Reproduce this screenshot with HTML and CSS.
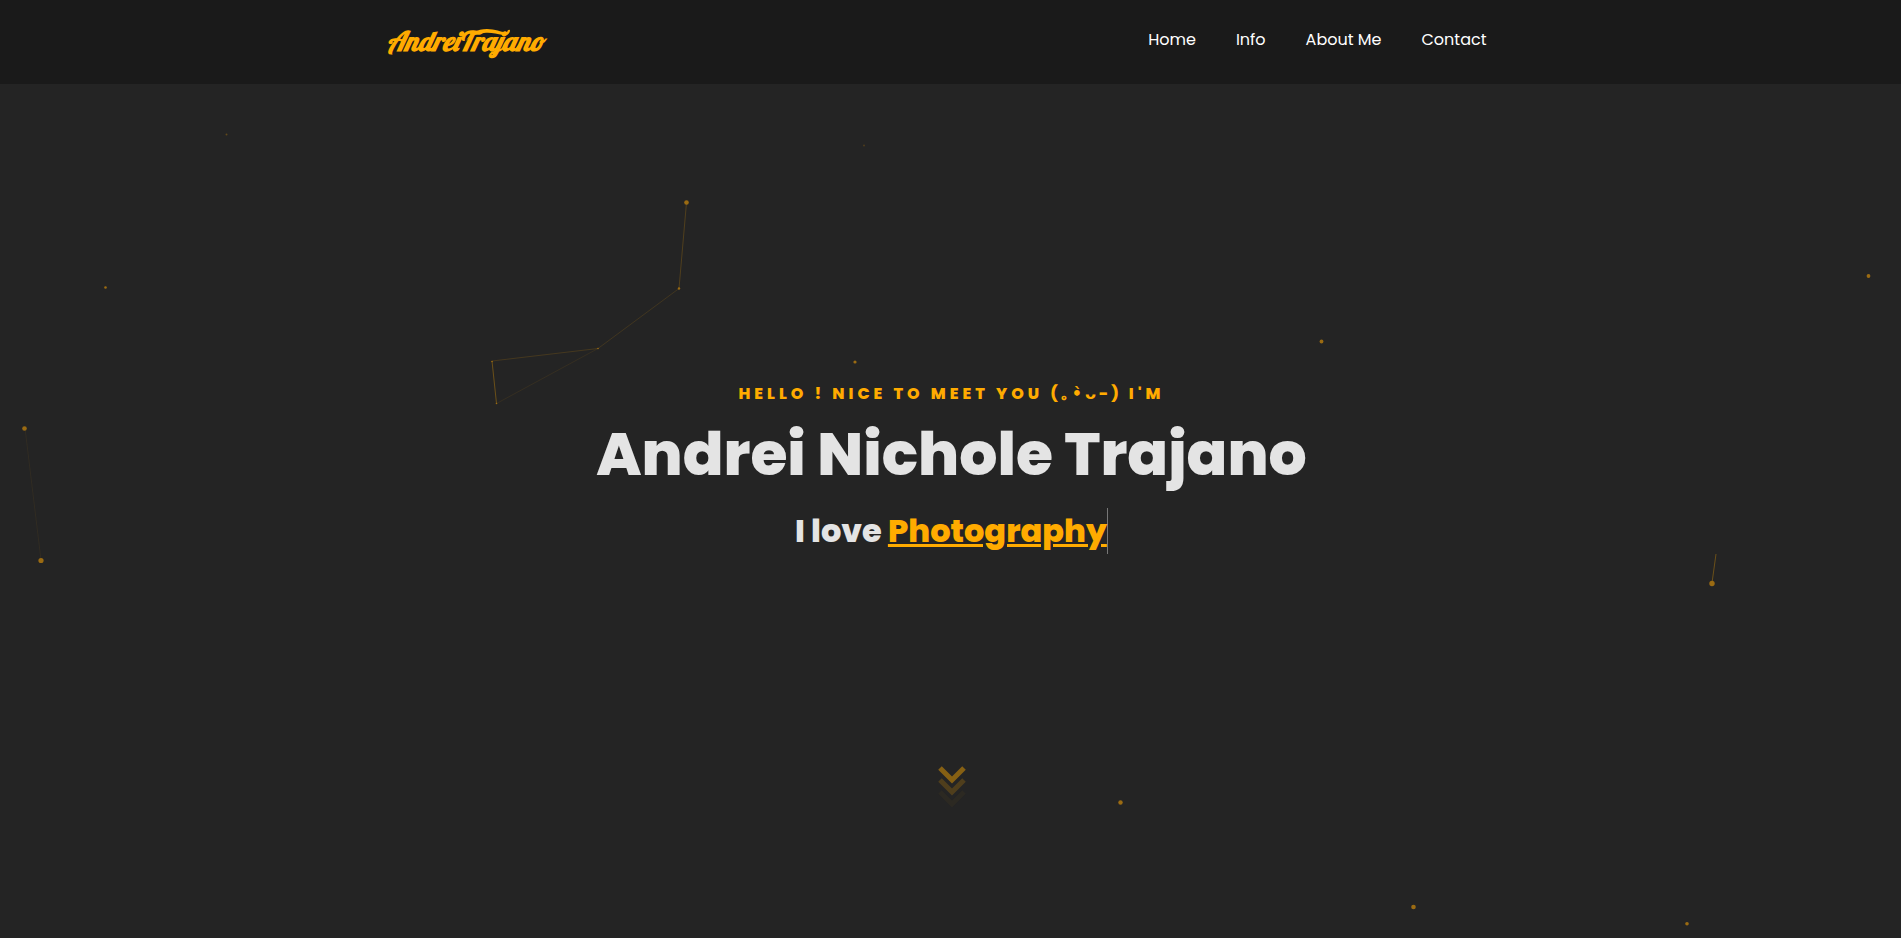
FILE: index.html
```html
<!DOCTYPE html>
<html lang="en">
<head>
<meta charset="utf-8">
<title>Andrei Trajano</title>
<link rel="stylesheet" href="styles.css">
</head>
<body>
<header class="site-header">
  <div class="header-inner">
    <a class="logo" href="#home">AndreiTrajano
      <svg class="swash" viewBox="0 0 46 14" aria-hidden="true"><path d="M1 13C5 5 12 1 22 1C31 1 38 5 42 4Q43 1 45 2C45 6 42 8 38 7C31 6 26 4 19 5C11 6 5 8 1 13Z"/></svg>
    </a>
    <nav class="nav" aria-label="Main">
      <a href="#home">Home</a>
      <a href="#info">Info</a>
      <a href="#about">About Me</a>
      <a href="#contact">Contact</a>
    </nav>
  </div>
</header>
<main class="hero" id="home">
  <svg class="particles" viewBox="0 84 1901 854" preserveAspectRatio="xMidYMin slice" aria-hidden="true">
    <g class="links">
      <path d="M686.500 202.500L679 288.500" opacity=".2"/>
      <path d="M679 288.500L598 348.500" opacity=".13"/>
      <path d="M598 348.500L492 361" opacity=".15"/>
      <path d="M598 348.500L496.500 403.500" opacity=".08"/>
      <path d="M492 361L496.500 403.500" opacity=".32"/>
      <path d="M25 428L41 560" opacity=".06"/>
      <path d="M1716 554L1712 583" opacity=".32"/>
    </g>
    <g class="dots">
      <circle cx="686.500" cy="202.500" r="2.300"/>
      <circle cx="679" cy="288.500" r="1.200"/>
      <circle cx="598" cy="348.500" r=".8"/>
      <circle cx="492" cy="361.500" r=".8"/>
      <circle cx="496.500" cy="403.500" r=".8"/>
      <circle cx="226.500" cy="134.500" r="1" opacity=".5"/>
      <circle cx="864" cy="145.500" r="1" opacity=".35"/>
      <circle cx="105.500" cy="287.500" r="1.300"/>
      <circle cx="24.500" cy="428.500" r="2.300"/>
      <circle cx="41" cy="560.500" r="2.600"/>
      <circle cx="855" cy="362" r="1.600"/>
      <circle cx="1321.500" cy="341.500" r="1.900"/>
      <circle cx="1868.500" cy="276" r="1.900"/>
      <circle cx="1712" cy="583.500" r="2.700"/>
      <circle cx="1120.500" cy="802.500" r="2.200"/>
      <circle cx="1413.500" cy="907" r="2.300"/>
      <circle cx="1687" cy="923.700" r="1.800"/>
    </g>
  </svg>
  <div class="intro">
    <p class="greeting">Hello ! Nice to meet you <span class="kaomoji">(｡•̀ᴗ-)</span> I'm</p>
    <h1 class="name">Andrei Nichole Trajano</h1>
    <h2 class="love">I love <span class="typed">Photography</span></h2>
  </div>
  <a class="scroll-down" href="#info" aria-label="Scroll down">
    <svg viewBox="0 0 28 42" width="28" height="42" aria-hidden="true">
      <path d="M2 3L14 15L26 3" opacity=".45"/>
      <path d="M2 15L14 27L26 15" opacity=".2"/>
      <path d="M2 27L14 39L26 27" opacity=".04"/>
    </svg>
  </a>
</main>
</body>
</html>
```
FILE: styles.css
```css
* { box-sizing: border-box; }
body {
  margin: 0;
  min-height: 100vh;
  display: flex;
  flex-direction: column;
  background: #242424;
  color: #e4e4e4;
  font-family: Poppins, Inter, sans-serif;
}
.site-header { background: #1a1a1a; }
.header-inner {
  display: flex;
  justify-content: space-between;
  align-items: flex-start;
  max-width: 1140px;
  height: 84px;
  margin: 0 auto;
  padding: 24px 34px 0 6px;
}
.logo {
  position: relative;
  color: #ffab00;
  font: italic 900 27px/34px "Lobster", "Lato", sans-serif;
  text-decoration: none;
}
.swash {
  position: absolute;
  left: 78px;
  top: 4px;
  width: 46px;
  height: 14px;
  fill: #ffab00;
}
.nav { display: flex; gap: 40px; }
.nav a {
  color: #fff;
  font-size: 16px;
  line-height: 32px;
  text-decoration: none;
}
.hero {
  position: relative;
  flex: 1;
  display: flex;
  flex-direction: column;
  align-items: center;
  padding-left: 2px;
  overflow: hidden;
}
.particles {
  position: absolute;
  inset: 0;
  width: 100%;
  height: 100%;
}
.links { stroke: #ffab00; fill: none; }
.dots { fill: #9b6b12; }
.intro { position: relative; margin-top: 296px; text-align: center; }
.greeting {
  margin: 0;
  color: #ffab00;
  font-size: 16px;
  font-weight: 800;
  line-height: 28px;
  letter-spacing: 4px;
  text-transform: uppercase;
}
.kaomoji { font-family: Poppins, "DejaVu Sans", sans-serif; letter-spacing: 3px; }
.name {
  margin: 0;
  font-size: 60px;
  font-weight: 800;
  line-height: 92px;
}
.love {
  margin: 8px 0 0;
  font-size: 32px;
  font-weight: 800;
  line-height: 46px;
}
.typed {
  display: inline-block;
  color: #ffab00;
  border-right: 1px solid #777;
  text-decoration: underline;
  text-decoration-thickness: 3px;
}
.scroll-down { position: relative; margin-top: 211px; line-height: 0; }
.scroll-down svg { fill: none; stroke: #ffab00; stroke-width: 5; }
```
